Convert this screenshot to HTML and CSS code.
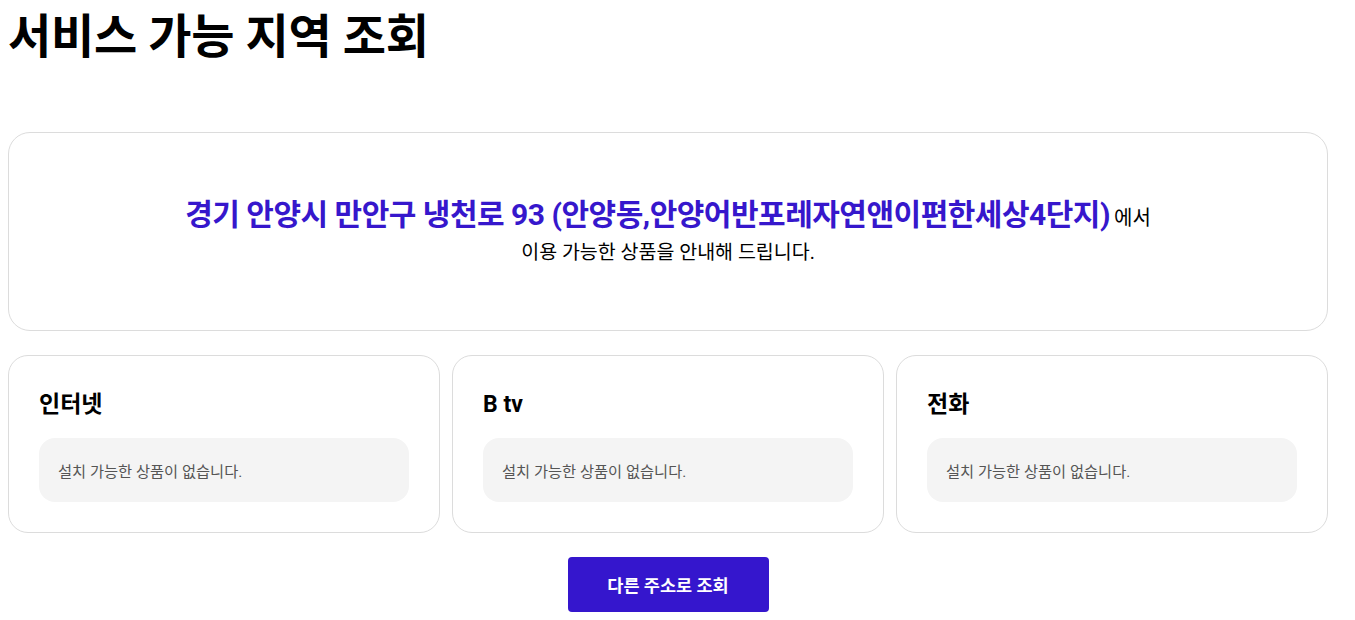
FILE: index.html
```html
<!DOCTYPE html>
<html lang="ko">
<head>
<meta charset="utf-8">
<link rel="stylesheet" href="styles.css">
</head>
<body>
<div class="page">
  <h1 class="title">서비스 가능 지역 조회</h1>
  <section class="info">
    <p class="addr-line"><span class="addr">경기 안양시 만안구 냉천로 93 (안양동,안양어반포레자연앤이편한세상4단지)</span> <span class="from">에서</span></p>
    <p class="desc">이용 가능한 상품을 안내해 드립니다.</p>
  </section>
  <div class="cards">
    <div class="card">
      <h2 class="card-title">인터넷</h2>
      <div class="empty">설치 가능한 상품이 없습니다.</div>
    </div>
    <div class="card">
      <h2 class="card-title">B tv</h2>
      <div class="empty">설치 가능한 상품이 없습니다.</div>
    </div>
    <div class="card">
      <h2 class="card-title">전화</h2>
      <div class="empty">설치 가능한 상품이 없습니다.</div>
    </div>
  </div>
  <div class="actions">
    <button class="btn">다른 주소로 조회</button>
  </div>
</div>
</body>
</html>
```
FILE: styles.css
```css
* { box-sizing: border-box; }
body {
  margin: 8px;
  font-family: Roboto, "Noto Sans CJK KR", sans-serif;
  color: #000;
  background: #fff;
}
.page { width: 1320px; }
.title {
  margin: 0;
  padding-top: 4px;
  font-size: 47px;
  font-weight: 700;
  line-height: 50px;
  letter-spacing: -0.3px;
}
.info {
  margin-top: 70px;
  height: 199px;
  border: 1px solid #dcdcdc;
  border-radius: 22px;
  display: flex;
  flex-direction: column;
  align-items: center;
  justify-content: center;
  text-align: center;
}
.addr-line { margin: 0; line-height: 38px; }
.addr {
  color: #3617cc;
  font-size: 30px;
  font-weight: 700;
  letter-spacing: -0.5px;
}
.from { font-size: 20px; }
.desc { margin: 0; font-size: 19.5px; line-height: 28px; }
.cards {
  margin-top: 24px;
  display: grid;
  grid-template-columns: repeat(3, 1fr);
  gap: 12px;
}
.card {
  border: 1px solid #dcdcdc;
  border-radius: 20px;
  padding: 32px 30px 30px 30px;
  height: 178px;
}
.card-title {
  margin: 0;
  font-size: 23px;
  font-weight: 700;
  line-height: 34px;
}
.empty {
  margin-top: 16px;
  background: #f4f4f4;
  border-radius: 16px;
  height: 64px;
  padding: 0 19px;
  display: flex;
  align-items: center;
  font-size: 15.3px;
  color: #555;
}
.actions {
  margin-top: 24px;
  display: flex;
  justify-content: center;
}
.btn {
  width: 201px;
  height: 55px;
  border: 0;
  border-radius: 4px;
  background: #3516cd;
  color: #fff;
  font-family: inherit;
  font-size: 17.5px;
  font-weight: 700;
}
```
